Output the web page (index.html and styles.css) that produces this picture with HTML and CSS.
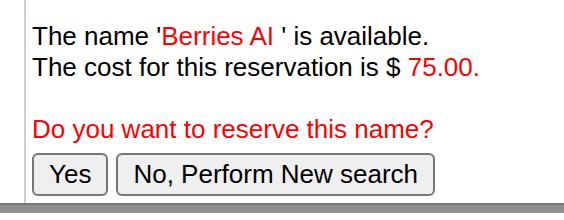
FILE: index.html
```html
<!DOCTYPE html>
<html>
<head>
    <title>Name Reservation</title>
    <link rel="stylesheet" href="styles.css">
</head>
<body>
    <div class="page">
        <div class="content">
            <p class="info">
                The name '<span class="hl">Berries AI </span>' is available.<br>
                The cost for this reservation is $ <span class="hl">75.00.</span>
            </p>
            <p class="question">Do you want to reserve this name?</p>
            <div class="actions">
                <button class="btn" type="button">Yes</button>
                <button class="btn" type="button">No, Perform New search</button>
            </div>
        </div>
    </div>
    <div class="footer"></div>
</body>
</html>
```

FILE: styles.css
```css
body {
    margin: 0;
    font-family: Arial, "Liberation Sans", sans-serif;
    background-color: #fff;
    color: #000;
}
.page {
    height: 203px;
    padding-left: 24px;
    box-sizing: border-box;
}
.content {
    height: 100%;
    border-left: 2px solid #cfcfcf;
    padding: 21px 0 0 6px;
    box-sizing: border-box;
}
.info {
    margin: 0;
    font-size: 26px;
    line-height: 31px;
}
.hl {
    color: #f00;
}
.question {
    margin: 31px 0 0;
    font-size: 26px;
    line-height: 31px;
    color: #f00;
}
.actions {
    display: flex;
    gap: 8px;
    margin-top: 8px;
}
.btn {
    height: 43px;
    padding: 0 15px;
    font-family: Arial, "Liberation Sans", sans-serif;
    font-size: 26px;
    color: #000;
    background-color: #efefef;
    border: 2px solid #767676;
    border-radius: 6px;
    box-sizing: border-box;
}
.footer {
    height: 10px;
    background-color: #8f8d8d;
    border-top: 2px solid #777;
    box-sizing: border-box;
}
```
